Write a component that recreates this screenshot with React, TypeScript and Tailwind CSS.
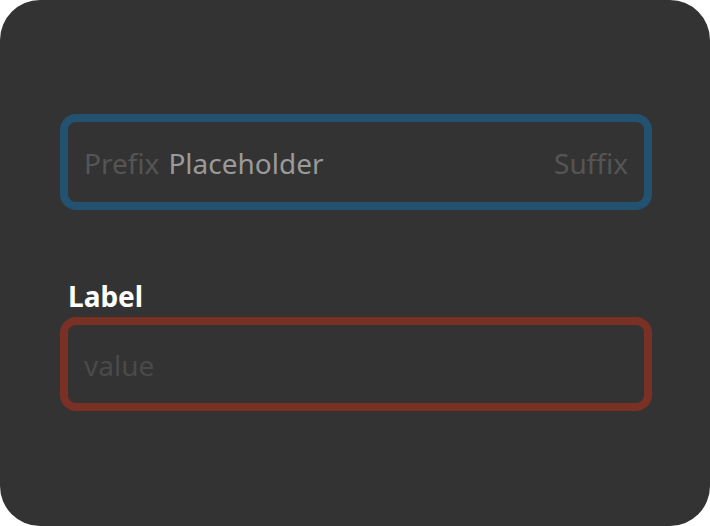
export default function App() {
  return (
    <div className="w-[710px] h-[526px] bg-white">
      <div
        className="w-[710px] h-[526px] rounded-[40px] bg-[#333333] pl-[60px] pr-[58px] pt-[114px] flex flex-col"
        style={{ fontFamily: '"Noto Sans", sans-serif' }}
      >
        <div className="h-[96px] border-8 border-[#235270] rounded-[16px] flex items-center pl-[16px] pr-[16px] pt-[2px] text-[28px]">
          <span className="text-[#555555]">Prefix</span>
          <span className="ml-[9px] text-[#9a9a9a]">Placeholder</span>
          <span className="ml-auto text-[#555555]">Suffix</span>
        </div>
        <div className="mt-[67px] mb-[2px] ml-2 text-[28px] leading-[38px] font-bold text-white">Label</div>
        <div className="h-[94px] border-8 border-[#7a3024] rounded-[16px] flex items-center pl-[16px] pt-[2px] text-[28px]">
          <span className="text-[#4a4a4a]">value</span>
        </div>
      </div>
    </div>
  )
}
